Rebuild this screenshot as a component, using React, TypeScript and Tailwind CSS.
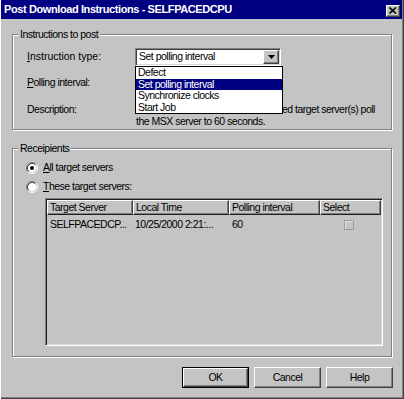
import { useState } from "react";

const Radio = ({ checked }: { checked?: boolean }) => (
  <svg width="12" height="12" viewBox="0 0 12 12" className="shrink-0">
    <circle cx="6" cy="6" r="4.5" fill="#ffffff" />
    <path d="M2.11 9.89 A5.5 5.5 0 0 1 9.89 2.11" stroke="#808080" fill="none" />
    <path d="M9.89 2.11 A5.5 5.5 0 0 1 2.11 9.89" stroke="#ffffff" fill="none" />
    <path d="M2.82 9.18 A4.5 4.5 0 0 1 9.18 2.82" stroke="#404040" fill="none" />
    <path d="M9.18 2.82 A4.5 4.5 0 0 1 2.82 9.18" stroke="#d8d8d8" fill="none" />
    {checked && <circle cx="6" cy="6" r="2" fill="#000000" />}
  </svg>
);

const options = ["Defect", "Set polling interval", "Synchronize clocks", "Start Job"];

const App = () => {
  const [selected, setSelected] = useState("Set polling interval");
  const [target, setTarget] = useState("all");

  return (
    <div className="w-[404px] h-[399px] bg-[#c4c4c4] text-black text-[10.5px] tracking-[-0.5px] font-['Liberation_Sans',Arial,sans-serif] shadow-[inset_1px_0_0_#ffffff,inset_-1px_-1px_0_#404040,inset_-2px_-2px_0_#808080] flex flex-col">
      {/* title bar */}
      <div className="h-[19px] ml-[1px] mr-[2px] bg-[#000080] flex items-center justify-between pl-[3px] pr-[2px]">
        <span className="text-white font-bold text-[11px] tracking-[-0.4px]">
          Post Download Instructions - SELFPACEDCPU
        </span>
        <button className="w-[14px] h-[12px] mt-[2px] bg-[#c4c4c4] border border-t-white border-l-white border-r-[#404040] border-b-[#404040] shadow-[inset_-1px_-1px_0_#808080] flex items-center justify-center">
          <svg width="8" height="7" viewBox="0 0 8 7">
            <path d="M0.5 0.5 L7 6.5 M7 0.5 L0.5 6.5" stroke="#000" strokeWidth="1.6" />
          </svg>
        </button>
      </div>

      <div className="flex flex-col pl-[12px] pt-[15px]">
        {/* Instructions to post */}
        <div className="w-[380px] h-[96px] border border-[#808080] shadow-[inset_1px_1px_0_#ffffff,1px_1px_0_#ffffff] flex flex-col">
          <span className="-mt-[7px] ml-[5px] w-fit px-[2px] bg-[#c4c4c4] leading-[13px]">
            Instructions to post
          </span>
          <div className="flex items-center h-[18px] mt-[7px] pl-[14px]">
            <span className="w-[108px] tracking-[0px]">
              <u>I</u>nstruction type:
            </span>
            <div className="relative w-[146px] h-[18px] bg-white border border-t-[#808080] border-l-[#808080] border-r-white border-b-white shadow-[inset_1px_1px_0_#404040,inset_-1px_-1px_0_#d8d8d8] flex items-center">
              <span className="pl-[3px] flex-1">{selected}</span>
              <div className="w-[16px] h-[14px] mr-[1px] bg-[#c4c4c4] border border-t-white border-l-white border-r-[#404040] border-b-[#404040] shadow-[inset_-1px_-1px_0_#808080] flex items-center justify-center">
                <svg width="7" height="4" viewBox="0 0 7 4">
                  <path d="M0 0 H7 L3.5 4 Z" fill="#000" />
                </svg>
              </div>
              {/* open list */}
              <div className="absolute top-[17px] -left-[1px] w-[148px] bg-white border border-black z-10 flex flex-col">
                {options.map((o) => (
                  <div
                    key={o}
                    onClick={() => setSelected(o)}
                    className={`h-[11.5px] leading-[11.5px] pl-[2px] ${
                      o === selected ? "bg-[#000080] text-white" : ""
                    }`}
                  >
                    {o}
                  </div>
                ))}
              </div>
            </div>
          </div>
          <div className="flex items-center h-[18px] mt-[8px] pl-[14px]">
            <span className="w-[108px]">
              <u>P</u>olling interval:
            </span>
          </div>
          <div className="flex mt-[11px] pl-[14px] leading-[12px]">
            <span className="w-[109px]">Description:</span>
            <span className="whitespace-nowrap">
              Determines how often all the selected target server(s) poll
              <br />
              the MSX server to 60 seconds.
            </span>
          </div>
        </div>

        {/* Receipients */}
        <div className="w-[380px] h-[209px] mt-[18px] border border-[#808080] shadow-[inset_1px_1px_0_#ffffff,1px_1px_0_#ffffff] flex flex-col">
          <span className="-mt-[7px] ml-[5px] w-fit px-[2px] bg-[#c4c4c4] leading-[13px]">
            Receipients
          </span>
          <div
            className="flex items-center gap-[5px] h-[16px] mt-[5px] pl-[13px]"
            onClick={() => setTarget("all")}
          >
            <Radio checked={target === "all"} />
            <span>
              <u>A</u>ll target servers
            </span>
          </div>
          <div
            className="flex items-center gap-[5px] h-[16px] mt-[3px] pl-[13px]"
            onClick={() => setTarget("these")}
          >
            <Radio checked={target === "these"} />
            <span>
              <u>T</u>hese target servers:
            </span>
          </div>
          <div className="w-[338px] h-[148px] mt-[3px] ml-[32px] border border-t-[#808080] border-l-[#808080] border-r-white border-b-white shadow-[inset_1px_1px_0_#202020,inset_-1px_-1px_0_#d8d8d8] p-[1px] flex flex-col">
            <div className="flex h-[15px]">
              {[
                ["Target Server", "w-[86px]"],
                ["Local Time", "w-[96px]"],
                ["Polling interval", "w-[91px]"],
                ["Select", "w-[61px]"],
              ].map(([label, w]) => (
                <div
                  key={label}
                  className={`${w} h-[15px] leading-[13px] pl-[2px] border border-t-white border-l-white border-r-[#404040] border-b-[#202020] shadow-[inset_-1px_-1px_0_#808080]`}
                >
                  {label}
                </div>
              ))}
            </div>
            <div className="flex h-[17px] items-center mt-[1px]">
              <span className="w-[86px] pl-[3px]">SELFPACEDCP...</span>
              <span className="w-[96px] pl-[2px]">10/25/2000 2:21:...</span>
              <span className="w-[91px] pl-[3px]">60</span>
              <span className="w-[61px] flex pl-[24px]">
                <span className="w-[10px] h-[10px] border border-[#9a9a9a] shadow-[inset_1px_1px_0_#e4e4e4]" />
              </span>
            </div>
          </div>
        </div>

        {/* buttons */}
        <div className="flex justify-end gap-[5px] mt-[10px] w-[381px]">
          <div className="w-[67px] h-[21px] border border-black">
            <button className="w-full h-full bg-[#c4c4c4] border border-t-white border-l-white border-r-[#404040] border-b-[#404040] shadow-[inset_-1px_-1px_0_#808080]">
              OK
            </button>
          </div>
          <button className="w-[67px] h-[21px] bg-[#c4c4c4] border border-t-white border-l-white border-r-[#404040] border-b-[#404040] shadow-[inset_-1px_-1px_0_#808080]">
            Cancel
          </button>
          <button className="w-[67px] h-[21px] bg-[#c4c4c4] border border-t-white border-l-white border-r-[#404040] border-b-[#404040] shadow-[inset_-1px_-1px_0_#808080]">
            Help
          </button>
        </div>
      </div>
    </div>
  );
};

export default App;
